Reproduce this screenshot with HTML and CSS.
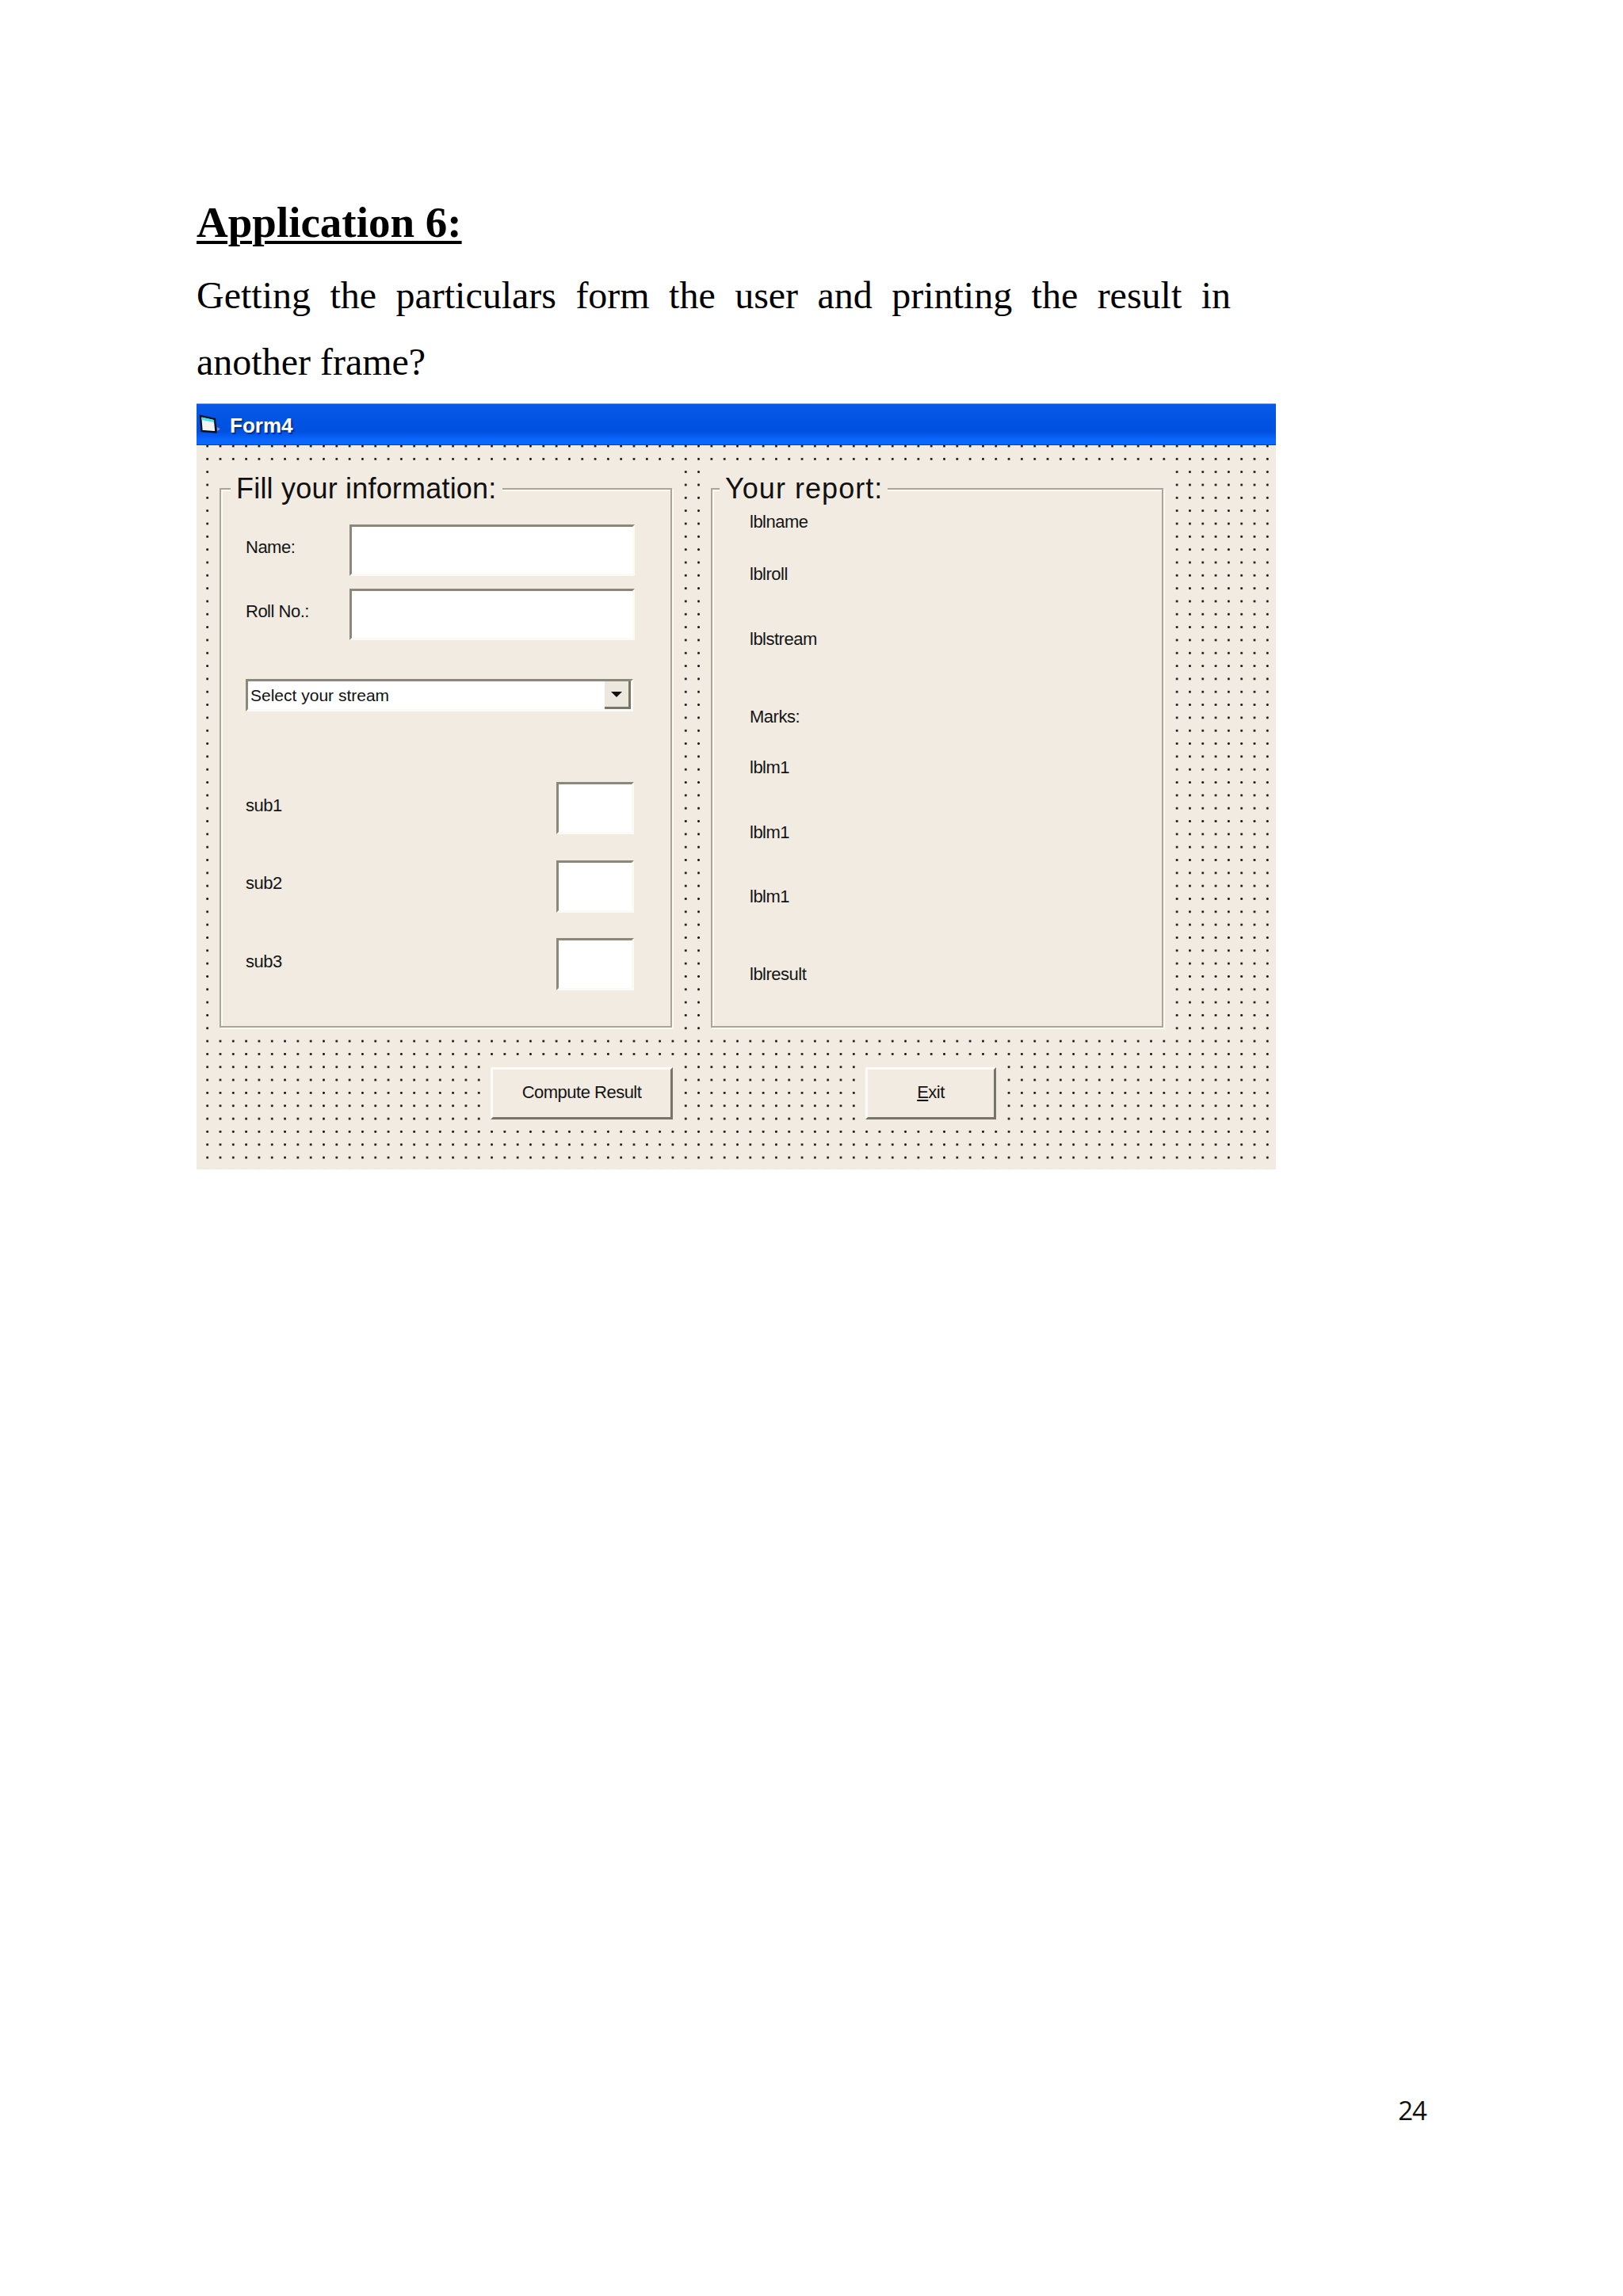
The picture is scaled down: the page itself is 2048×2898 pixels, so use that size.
FILE: index.html
```html
<!DOCTYPE html>
<html lang="en">
<head>
  <meta charset="UTF-8">
  <title>Application 6</title>
  <link rel="stylesheet" href="styles.css">
</head>
<body>
  <div class="page">
    <h1 class="heading">Application 6:</h1>
    <p class="question">Getting the particulars form the user and printing the result in another frame?</p>

    <div class="form-window">
      <div class="titlebar">
        <svg class="form-icon" viewBox="0 0 32 28" width="32" height="28">
          <polygon points="2,3 20,7 21.5,23.5 3.5,22" fill="#f4f4f0" stroke="#08101c" stroke-width="2.4"/>
          <polygon points="3.5,4.5 19,8 19,11 3.5,8" fill="#43e0ee"/>
          <polygon points="23,17 27,19.5 23,22" fill="#8a94b0"/>
        </svg>
        <span class="form-title">Form4</span>
      </div>

      <div class="form-body">
        <div class="frames">
          <div class="frame-cover">
            <fieldset class="frame">
              <legend>Fill your information:</legend>
              <div class="fill-fields">
                <div class="field-row">
                  <label>Name:</label>
                  <input class="text-box wide" type="text">
                </div>
                <div class="field-row">
                  <label>Roll No.:</label>
                  <input class="text-box wide" type="text">
                </div>
                <div class="combo">
                  <span>Select your stream</span>
                  <div class="combo-btn"><i class="combo-arrow"></i></div>
                </div>
                <div class="marks">
                  <div class="mark-row">
                    <label>sub1</label>
                    <input class="text-box small" type="text">
                  </div>
                  <div class="mark-row">
                    <label>sub2</label>
                    <input class="text-box small" type="text">
                  </div>
                  <div class="mark-row">
                    <label>sub3</label>
                    <input class="text-box small" type="text">
                  </div>
                </div>
              </div>
            </fieldset>
          </div>

          <div class="frame-cover">
            <fieldset class="frame report">
              <legend>Your report:</legend>
              <div class="report-labels">
                <span>lblname</span>
                <span>lblroll</span>
                <span>lblstream</span>
                <span>Marks:</span>
                <span>lblm1</span>
                <span>lblm1</span>
                <span>lblm1</span>
                <span>lblresult</span>
              </div>
            </fieldset>
          </div>
        </div>

        <div class="buttons">
          <button class="vb-btn compute">Compute Result</button>
          <button class="vb-btn exit"><u>E</u>xit</button>
        </div>
      </div>
    </div>

    <div class="page-number">24</div>
  </div>
</body>
</html>
```

FILE: styles.css
```css
body {
  margin: 0;
  background: #fff;
  color: #000;
  font-family: "Liberation Serif", serif;
}

.page {
  height: 2898px;
  box-sizing: border-box;
  padding: 251px 248px 0;
}

.heading {
  margin: 0 0 20px;
  font-size: 55px;
  line-height: 60px;
  font-weight: bold;
  text-decoration: underline;
  text-decoration-thickness: 4px;
  text-underline-offset: 5px;
}

.question {
  width: 1305px;
  margin: 0 0 10px;
  font-size: 48px;
  line-height: 84px;
  text-align: justify;
}

/* VB form */
.form-window {
  width: 1362px;
  font-family: "Liberation Sans", sans-serif;
  color: #151515;
}

.titlebar {
  height: 53px;
  box-sizing: border-box;
  display: flex;
  align-items: center;
  gap: 7px;
  padding-left: 3px;
  border-top: 1px solid #9fa6b4;
  border-bottom: 1px solid #0b3fb4;
  background: linear-gradient(#0a5ae8, #0052e2 50%, #0150e0 68%, #0a68ff 90%, #0a66fa);
}

.form-title {
  padding-top: 3px;
  color: #fff;
  font-size: 26px;
  font-weight: bold;
  text-shadow: 2px 2px 1px #0a2f8c;
}

.form-body {
  height: 914px;
  box-sizing: border-box;
  padding: 28px 0 0 21px;
  background-color: #f1ebe2;
  background-image: radial-gradient(circle, #111 1.1px, transparent 1.8px);
  background-size: 16.32px 16.33px;
  background-position: 5.54px -7.16px;
}

.frames {
  display: grid;
  grid-template-columns: 586px 586px;
  column-gap: 34px;
}

.frame-cover {
  padding: 7px 7px 6px 8px;
  background: #f1ebe2;
}

.frame {
  height: 700px;
  box-sizing: border-box;
  margin: 0;
  padding: 0;
  border: 2px solid #aaa597;
  box-shadow: 2px 2px 0 #fbf9f3, inset 2px 2px 0 #fbf9f3;
}

.frame legend {
  margin-left: 12px;
  padding: 0 7px;
  height: 40px;
  background: #f1ebe2;
  color: #111;
  font-size: 36px;
  letter-spacing: 0.2px;
  line-height: 40px;
}

.report legend {
  margin-left: 9px;
  padding: 0 6px 0 7px;
  letter-spacing: 1.05px;
}

.fill-fields {
  display: flex;
  flex-direction: column;
  padding: 25px 0 0 31px;
}

label,
.report-labels span,
.vb-btn {
  font-size: 22px;
  letter-spacing: -0.5px;
}

.field-row {
  display: flex;
  align-items: center;
  margin-bottom: 16px;
}

.field-row label {
  width: 131px;
  padding-bottom: 7px;
}

.text-box {
  box-sizing: border-box;
  margin: 0;
  padding: 0;
  background: #fff;
  border: 3px solid;
  border-color: #8b8779 #fcfaf5 #fcfaf5 #8b8779;
}

.wide {
  width: 360px;
  height: 65px;
}

.small {
  width: 98px;
  height: 66px;
}

.combo {
  width: 489px;
  height: 41px;
  box-sizing: border-box;
  display: flex;
  align-items: center;
  justify-content: space-between;
  margin-top: 33px;
  padding-left: 3px;
  background: #fff;
  border: 3px solid;
  border-color: #8b8779 #fcfaf5 #fcfaf5 #8b8779;
  color: #111;
  font-size: 21px;
}

.combo-btn {
  width: 33px;
  height: 35px;
  box-sizing: border-box;
  display: flex;
  align-items: center;
  justify-content: center;
  background: #ece8de;
  border-right: 3px solid #77746a;
  border-bottom: 3px solid #77746a;
}

.combo-arrow {
  width: 0;
  height: 0;
  border-left: 7px solid transparent;
  border-right: 7px solid transparent;
  border-top: 7px solid #111;
}

.marks {
  display: flex;
  flex-direction: column;
  gap: 32.5px;
  margin-top: 89px;
}

.mark-row {
  width: 490px;
  display: flex;
  align-items: center;
  justify-content: space-between;
}

.mark-row label {
  padding-bottom: 7px;
}

.report-labels {
  display: grid;
  grid-template-rows: 66px 82px 98px 64px 82px 81px 98px 22px;
  padding: 11px 0 0 47px;
  line-height: 22px;
}

.buttons {
  display: flex;
  gap: 243px;
  margin: 44px 0 0 350px;
}

.vb-btn {
  height: 66px;
  box-sizing: border-box;
  padding: 0 0 3px;
  background: #f1ebe2;
  color: #151515;
  font-family: "Liberation Sans", sans-serif;
  border: 3px solid;
  border-color: #fdfcf8 #77746a #77746a #fdfcf8;
  box-shadow: 0 0 0 8px #f1ebe2;
}

.compute {
  width: 230px;
}

.exit {
  width: 165px;
}

.page-number {
  margin-top: 1165px;
  text-align: right;
  font-family: "Open Sans", sans-serif;
  font-size: 33px;
  letter-spacing: -1px;
  color: #111;
}
```
